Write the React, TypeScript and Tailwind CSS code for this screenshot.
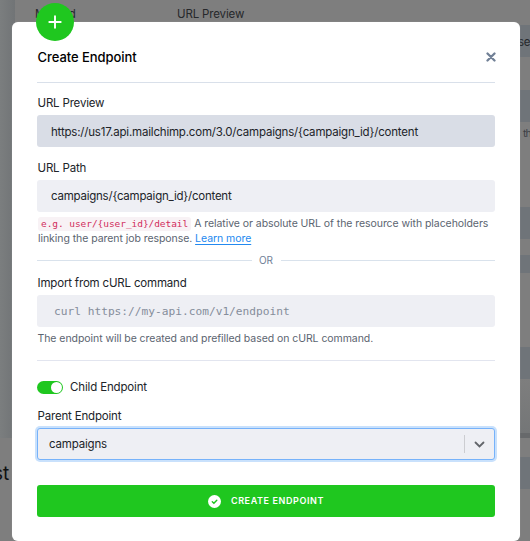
import React from "react";

function Backdrop() {
  return (
    <div className="absolute inset-0 flex flex-col bg-[#7e7e7e]">
      <div className="flex h-[438px] shrink-0">
        <div className="w-[15px] shrink-0 bg-gradient-to-r from-[#7b7e7f] to-[#717476]" />
        <div className="flex grow items-start text-[11.5px] leading-[14px] tracking-[-0.15px] text-[#26282b]">
          <span className="ml-5 mt-[7px] w-[142px]">Method</span>
          <span className="mt-[7px]">URL Preview</span>
        </div>
        <div className="flex w-[14px] shrink-0 flex-col overflow-hidden text-[11.5px] text-[#26282b]">
          <div className="mt-[25px] h-8 shrink-0 bg-[#6f7479] pl-[2px] leading-[34px] tracking-[-0.2px]">se</div>
          <div className="mt-[33px] h-8 shrink-0 bg-[#6f7479]" />
          <div className="h-[85px] shrink-0 whitespace-nowrap pl-[7px] pt-[4px] text-[10.5px] leading-[15px] tracking-[-1px] text-[#3b4046]">th</div>
          <div className="h-8 shrink-0 bg-[#6f7479]" />
          <div className="mt-4 h-[18px] shrink-0 bg-[#6f7479]" />
          <div className="mt-[74px] h-8 shrink-0 bg-[#6f7479]" />
          <div className="h-[54px] shrink-0 bg-gradient-to-b from-[#7e7e7e] to-[#747677]" />
          <div className="h-[5px] shrink-0 bg-[#67696b]" />
        </div>
      </div>
      <div className="flex grow justify-between">
        <span className="-ml-[7px] mt-[22px] text-[19px] leading-7 text-[#101112]">st</span>
        <div className="mt-[19px] h-8 w-[14px] bg-[#6f7479]" />
      </div>
    </div>
  );
}

function Label({ children }: { children: React.ReactNode }) {
  return <div className="h-5 pl-[0.5px] text-[11.5px] leading-[17px] tracking-[-0.18px] text-[#212429]">{children}</div>;
}

export default function App() {
  return (
    <div className="relative h-[541px] w-[530px] overflow-hidden font-['Inter',sans-serif]">
      <Backdrop />
      <div className="absolute left-3 top-[22px] flex h-[519px] w-[508px] flex-col rounded-[6px] bg-white pl-[25px] pr-[25px] shadow-[0_0_1px_#aaa]">
        <div className="absolute -top-[19px] left-6 flex h-[38px] w-[38px] items-center justify-center rounded-full bg-[#1fc71f]">
          <svg width="14" height="14" viewBox="0 0 14 14" fill="none" stroke="white" strokeWidth="1.9" strokeLinecap="round">
            <path d="M7 1.3v11.4M1.3 7h11.4" />
          </svg>
        </div>
        <div className="flex h-[60px] shrink-0 items-start justify-between pt-[26px]">
          <h1 className="pl-[0.5px] text-[13px] font-medium leading-[18px] tracking-[-0.05px] text-black">Create Endpoint</h1>
          <svg className="-mr-[1px] mt-1" width="10" height="10" viewBox="0 0 10 10" stroke="#718096" strokeWidth="2.3" strokeLinecap="round">
            <path d="M1.5 1.5l7 7M8.5 1.5l-7 7" />
          </svg>
        </div>
        <div className="h-px shrink-0 bg-[#d9e0ea]" />
        <div className="mt-3 flex flex-col">
          <Label>URL Preview</Label>
          <div className="h-8 rounded-[3px] bg-[#d9dde6] pl-[14px] text-[11.5px] leading-[34px] tracking-[-0.19px] text-[#212429]">https://us17.api.mailchimp.com/3.0/campaigns/{"{campaign_id}"}/content</div>
        </div>
        <div className="mt-[13px] flex flex-col">
          <Label>URL Path</Label>
          <div className="h-8 rounded-[3px] bg-[#eeeff4] pl-[14px] text-[11.5px] leading-[33px] tracking-[-0.23px] text-[#212429]">campaigns/{"{campaign_id}"}/content</div>
          <div className="mt-[4px] h-[30px] whitespace-nowrap text-[10.5px] leading-[15px] tracking-[-0.06px] text-[#5b6470]">
            <div className="flex items-center pl-px">
              <code className="mr-[3px] h-[14px] rounded-[3px] bg-[#f8f2f5] px-[3px] font-['DejaVu_Sans_Mono',monospace] text-[9.5px] leading-[14px] text-[#d12d5c]">e.g. user/{"{user_id}"}/detail</code>
              <span>A relative or absolute URL of the resource with placeholders</span>
            </div>
            <div className="pl-px">linking the parent job response. <a className="text-[#2389f0] underline underline-offset-2">Learn more</a></div>
          </div>
        </div>
        <div className="mt-[7px] flex h-[15px] items-center text-[10px] leading-[15px] text-[#718096]">
          <span className="h-px grow bg-[#d9e2ec]" />
          <span className="w-[29px] text-center">OR</span>
          <span className="h-px grow bg-[#d9e2ec]" />
        </div>
        <div className="mt-[7px] flex flex-col">
          <Label>Import from cURL command</Label>
          <div className="h-8 rounded-[3px] bg-[#eeeff4] pl-[17px] font-['DejaVu_Sans_Mono',monospace] text-[11.2px] leading-[33px] text-[#858d9b]">curl https://my-api.com/v1/endpoint</div>
          <div className="mt-1 h-[15px] pl-[0.5px] text-[10.5px] leading-[15px] tracking-[-0.06px] text-[#5b6470]">The endpoint will be created and prefilled based on cURL command.</div>
        </div>
        <div className="mt-[14px] h-px shrink-0 bg-[#e2e5ef]" />
        <div className="mt-[18px] flex h-4 items-center gap-[7px] text-[11.5px] tracking-[-0.15px] text-[#212429]">
          <span className="flex h-[13px] w-[26px] items-center justify-end rounded-full bg-[#1fc71f] pr-px">
            <span className="h-[11px] w-[11px] rounded-full bg-white" />
          </span>
          <span className="pt-px">Child Endpoint</span>
        </div>
        <div className="mt-[13px] flex flex-col">
          <Label>Parent Endpoint</Label>
          <div className="flex h-8 items-center rounded-[3px] border border-[#76b2fa] bg-[#eeeff4] pl-[11px] text-[11.5px] tracking-[-0.18px] text-[#212429] shadow-[0_0_0_2px_#c9e1fc]">
            <span className="grow pt-px">campaigns</span>
            <span className="h-[18px] w-px bg-[#cccdd1]" />
            <svg className="ml-[9px] mr-[9px]" width="11" height="11" viewBox="0 0 11 11" fill="none" stroke="#62656a" strokeWidth="1.8" strokeLinecap="round">
              <path d="M1.5 3.5l4 4l4-4" />
            </svg>
          </div>
        </div>
        <button className="mt-[25px] flex h-8 shrink-0 items-center justify-center gap-[10px] rounded-[3px] bg-[#1fc71f] text-[9px] font-semibold tracking-[0.6px] text-white">
          <svg width="13" height="13" viewBox="0 0 13 13" fill="none">
            <circle cx="6.5" cy="6.5" r="6.5" fill="white" />
            <path d="M4.3 6.7l1.6 1.5l2.9-3" stroke="#1fc71f" strokeWidth="1.4" strokeLinecap="round" />
          </svg>
          CREATE ENDPOINT
        </button>
      </div>
    </div>
  );
}
